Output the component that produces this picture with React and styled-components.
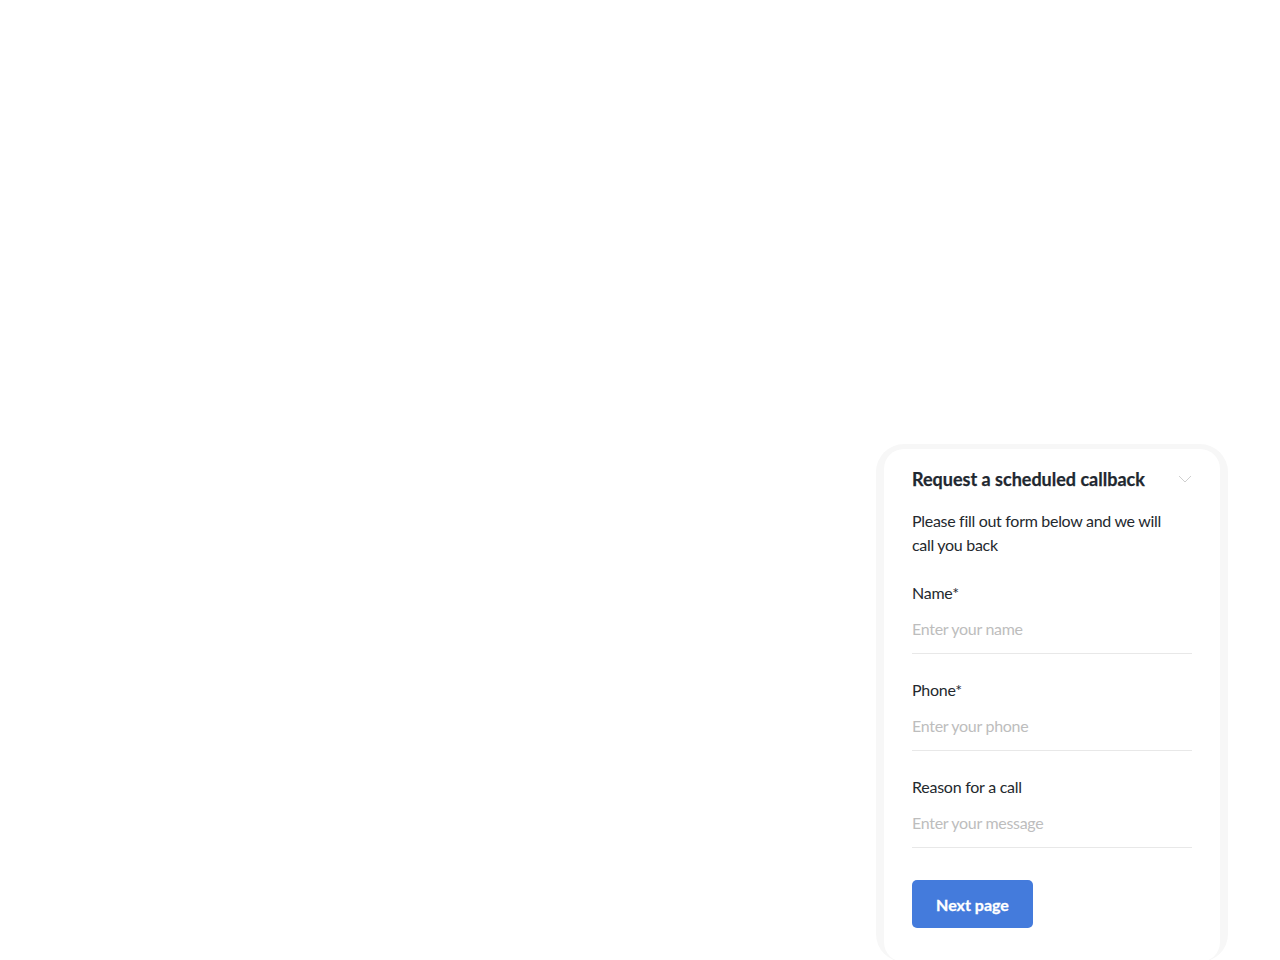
import React from "react";
import styled, { createGlobalStyle } from "styled-components";

const Global = createGlobalStyle`
  * { box-sizing: border-box; }
  html, body { margin: 0; padding: 0; background: #ffffff; }
  body { font-family: "Source Sans Pro", Lato, "Noto Sans", sans-serif; }
`;

const Page = styled.div`
  min-height: 960px;
  height: 960px;
  overflow: hidden;
  display: flex;
  justify-content: flex-end;
  align-items: flex-start;
  padding: 444px 52px 0 0;
`;

const Frame = styled.div`
  width: 352px;
  height: 518px;
  padding: 5px 8px 0 8px;
  background: #f7f7f7;
  border-radius: 28px;
  display: flex;
`;

const Card = styled.div`
  flex: 1;
  background: #ffffff;
  border-radius: 20px;
  padding: 18px 28px 0 28px;
  display: flex;
  flex-direction: column;
`;

const Header = styled.div`
  display: flex;
  align-items: center;
  justify-content: space-between;
  height: 24px;
`;

const Title = styled.h2`
  margin: 0;
  font-size: 18px;
  line-height: 24px;
  font-weight: 700;
  color: #1f2830;
  letter-spacing: 0;
  -webkit-text-stroke: 0.25px #1f2830;
`;

const Chevron = styled.svg`
  width: 14px;
  height: 8px;
`;

const Intro = styled.p`
  margin: 18px 0 24px 0;
  max-width: 256px;
  font-size: 16px;
  line-height: 24px;
  color: #24292e;
  letter-spacing: -0.3px;
`;

const Field = styled.div`
  display: flex;
  flex-direction: column;
  margin-bottom: ${(p) => (p.$last ? "32px" : "24px")};
`;

const Label = styled.label`
  font-size: 16px;
  line-height: 24px;
  color: #24292e;
  letter-spacing: -0.25px;
`;

const Input = styled.input`
  border: none;
  border-bottom: 1px solid #e8e8e8;
  padding: 11px 0 13px 0;
  height: 49px;
  font-family: inherit;
  font-size: 16px;
  line-height: 24px;
  letter-spacing: -0.3px;
  color: #24292e;
  outline: none;
  background: transparent;
  &::placeholder { color: #bdbdbd; }
`;

const Button = styled.button`
  align-self: flex-start;
  width: 121px;
  height: 48px;
  padding: 0;
  border: none;
  border-radius: 5px;
  background: #447bdc;
  color: #ffffff;
  font-family: inherit;
  font-size: 16px;
  font-weight: 700;
  -webkit-text-stroke: 0.3px #ffffff;
  cursor: pointer;
`;

export default function App() {
  return (
    <>
      <Global />
      <Page>
        <Frame>
          <Card>
            <Header>
              <Title>Request a scheduled callback</Title>
              <Chevron viewBox="0 0 14 8" fill="none">
                <path d="M1 1l6 6 6-6" stroke="#cfcfcf" strokeWidth="1" />
              </Chevron>
            </Header>
            <Intro>Please fill out form below and we will call you back</Intro>
            <Field>
              <Label>Name*</Label>
              <Input placeholder="Enter your name" />
            </Field>
            <Field>
              <Label>Phone*</Label>
              <Input placeholder="Enter your phone" />
            </Field>
            <Field $last>
              <Label>Reason for a call</Label>
              <Input placeholder="Enter your message" />
            </Field>
            <Button>Next page</Button>
          </Card>
        </Frame>
      </Page>
    </>
  );
}
